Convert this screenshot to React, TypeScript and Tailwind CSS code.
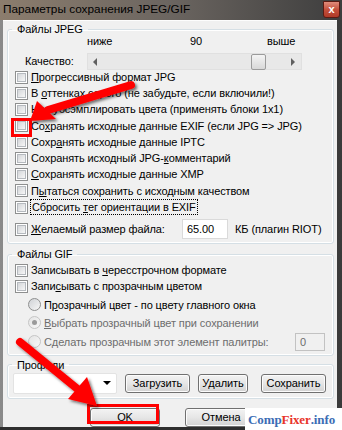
import React, { FC, ReactNode } from "react";

const Box: FC = () => (
	<span className="w-[13px] h-[13px] shrink-0 border border-[#8e8f8f] bg-white p-[1px]">
		<span className="block w-full h-full border border-[#b5b9be] bg-gradient-to-br from-[#d4d6d9] to-[#f7f7f7]" />
	</span>
);

const Radio: FC<{ checked?: boolean; disabled?: boolean }> = ({ checked, disabled }) => (
	<span
		className={
			"w-[13px] h-[13px] shrink-0 rounded-full border flex items-center justify-center " +
			(disabled
				? "border-[#c5c5c5] bg-gradient-to-br from-[#e4e4e4] to-[#f8f8f8]"
				: "border-[#8e8f8f] bg-gradient-to-br from-[#cfd2d6] to-[#f7f7f7]")
		}
	>
		{checked && <span className="w-[5px] h-[5px] rounded-full bg-[#9a9a9a]" />}
	</span>
);

const Check: FC<{ children: ReactNode }> = ({ children }) => (
	<div className="flex items-center h-[16.25px] pl-[7px] gap-[3px] whitespace-nowrap">
		<Box />
		<span>{children}</span>
	</div>
);

const Btn: FC<{ w: string; children: ReactNode }> = ({ w, children }) => (
	<div
		className={
			w +
			" h-[19px] flex items-center justify-center rounded-[3px] border border-[#707070] bg-gradient-to-b from-[#f3f3f3] via-[#e6e6e6] to-[#d2d2d2] shadow-[inset_0_0_0_1px_#fcfcfc]"
		}
	>
		{children}
	</div>
);

const Legend: FC<{ children: ReactNode }> = ({ children }) => (
	<legend className="ml-[4px] px-[5px] leading-[14px]">{children}</legend>
);

const App: FC = () => {
	return (
		<div className="relative w-[342px] h-[430px] overflow-hidden bg-gradient-to-r from-[#8a8a8a] to-[#3a3a3a] font-['Liberation_Sans',Arial,sans-serif] text-[11px] tracking-[-0.1px] text-black">
			{/* title bar */}
			<div className="h-[20px] flex items-center bg-gradient-to-r from-[#8c7d6d] via-[#6b6560] to-[#3e3e3e]">
				<span className="pl-[3px] text-[11.8px] tracking-normal text-black leading-none">Параметры сохранения JPEG/GIF</span>
				<div className="ml-auto mr-[2px] mb-[2px] w-[17px] h-[17px] rounded-b-[3px] border border-[#5a1a12] bg-gradient-to-b from-[#e08c7c] via-[#c4503c] to-[#b03a28] flex items-center justify-center text-white font-bold text-[11px] leading-none">
					x
				</div>
			</div>

			{/* window body */}
			<div className="ml-[3px] mr-[5px] h-[407px] bg-[#f0f0f0] border-t border-[#fdfdfd] pl-[4px] pr-[3px] pt-[1px] flex flex-col">
				{/* JPEG */}
				<fieldset className="border border-[#d5dfe5] rounded-[3px] pb-0 shadow-[inset_0_0_0_1px_#ffffff]">
					<Legend>Файлы JPEG</Legend>
					<div className="flex h-[14px] mt-[-2px] items-center">
						<span className="ml-[79px] w-[60px]">ниже</span>
						<span className="w-[42px] text-center ml-[28px]">90</span>
						<span className="ml-[50px]">выше</span>
					</div>
					<div className="flex items-center h-[17px] mt-[5px]">
						<span className="pl-[17px] w-[79px]">Качество:</span>
						<div className="w-[215px] h-[17px] bg-[#e8e8e8] border border-[#e0e0e0] flex items-center">
							<span className="w-0 h-0 ml-[5px] border-y-[4px] border-y-transparent border-r-[4px] border-r-[#606060]" />
							<div className="ml-auto w-[15px] h-[16px] rounded-[2px] border border-[#9b9b9b] bg-gradient-to-b from-[#f4f4f4] to-[#d8d8d8]" />
							<span className="ml-[25px] mr-[6px] w-0 h-0 border-y-[4px] border-y-transparent border-l-[4px] border-l-[#606060]" />
						</div>
					</div>
					<div className="mt-[-1px]">
						<Check>
							<u>П</u>рогрессивный формат JPG
						</Check>
						<Check>
							В <u>о</u>ттенках серого (не забудьте, если включили!)
						</Check>
						<Check>Не субсэмплировать цвета (применять блоки 1x1)</Check>
						<Check>
							Со<u>х</u>ранять исходные данные EXIF (если JPG =&gt; JPG)
						</Check>
						<Check>
							Сохр<u>а</u>нять исходные данные IPTC
						</Check>
						<Check>
							Сохранять исходный JPG-<u>к</u>омментарий
						</Check>
						<Check>
							<u>С</u>охранять исходные данные XMP
						</Check>
						<Check>
							П<u>ы</u>таться сохранить с исходным качеством
						</Check>
						<div className="flex items-center h-[16.25px] pl-[7px] gap-[2px] whitespace-nowrap">
							<Box />
							<span className="border border-dotted border-black px-[1px] leading-[14px]">
								Сбросить <u>т</u>ег ориентации в EXIF
							</span>
						</div>
						<div className="flex items-center h-[20px] mt-[4px] mb-[4px] pl-[7px] gap-[3px] whitespace-nowrap">
							<Box />
							<span className="w-[148px]">
								<u>Ж</u>елаемый размер файла:
							</span>
							<div className="w-[46px] h-[20px] bg-white border border-[#dadada] flex items-center pl-[4px]">
								65.00
							</div>
							<span className="ml-[4px]">КБ (плагин RIOT)</span>
						</div>
					</div>
				</fieldset>

				{/* GIF */}
				<fieldset className="mt-[3px] border border-[#d5dfe5] rounded-[3px] pb-[3px] shadow-[inset_0_0_0_1px_#ffffff]">
					<Legend>Файлы GIF</Legend>
					<div className="mt-[1px]">
						<Check>
							Записывать в <u>ч</u>ересстрочном формате
						</Check>
						<Check>
							Запи<u>с</u>ывать с прозрачным цветом
						</Check>
					</div>
					<div className="flex items-center h-[18px] pl-[20px] gap-[3px] whitespace-nowrap mt-[1px]">
						<Radio />
						<span>
							П<u>р</u>озрачный цвет - по цвету главного окна
						</span>
					</div>
					<div className="flex items-center h-[18px] pl-[20px] gap-[3px] whitespace-nowrap text-[#6d6d6d]">
						<Radio checked disabled />
						<span>
							<u>В</u>ыбрать прозрачный цвет при сохранении
						</span>
					</div>
					<div className="flex items-center h-[20px] pl-[20px] gap-[3px] whitespace-nowrap text-[#6d6d6d]">
						<Radio disabled />
						<span className="w-[248px]">
							С<u>д</u>елать прозрачным этот элемент палитры:
						</span>
						<div className="w-[30px] h-[18px] bg-[#f0f0f0] border border-[#c2c2c2] pl-[4px] flex items-center">0</div>
					</div>
				</fieldset>

				{/* Profiles */}
				<fieldset className="mt-[2px] border border-[#d5dfe5] rounded-[3px] pb-[4px] shadow-[inset_0_0_0_1px_#ffffff]">
					<Legend>Профили</Legend>
					<div className="flex items-center pl-[5px] mt-[1px]">
						<div className="w-[104px] h-[21px] bg-white border border-[#e3e3e3] rounded-[2px] flex items-center justify-end pr-[5px]">
							<span className="w-0 h-0 border-x-[4px] border-x-transparent border-t-[4px] border-t-black" />
						</div>
						<div className="ml-[8px]">
							<Btn w="w-[65px]">Загрузить</Btn>
						</div>
						<div className="ml-[8px]">
							<Btn w="w-[50px]">Удалить</Btn>
						</div>
						<div className="ml-[13px]">
							<Btn w="w-[65px]">Сохранить</Btn>
						</div>
					</div>
				</fieldset>

				<div className="flex mt-[9px]">
					<div className="ml-[83px]">
						<Btn w="w-[70px]">OK</Btn>
					</div>
					<div className="ml-[25px]">
						<Btn w="w-[72px]">Отмена</Btn>
					</div>
				</div>
			</div>
			<div className="h-[3px] bg-[#2e2e2e]" />

			{/* annotations */}
			<svg className="absolute left-0 top-0 pointer-events-none" width="342" height="430" viewBox="0 0 342 430">
				<defs>
					<filter id="sh" x="-20%" y="-20%" width="140%" height="140%">
						<feDropShadow dx="2" dy="2" stdDeviation="1.8" floodColor="#000" floodOpacity="0.55" />
					</filter>
				</defs>
				<rect x="12.5" y="119.5" width="18" height="16" fill="none" stroke="#ff0000" strokeWidth="3" />
				<rect x="88.5" y="405.5" width="69" height="17" fill="none" stroke="#ff0000" strokeWidth="3" />
				<g filter="url(#sh)" fill="#ff0000">
					<line x1="131" y1="85" x2="48" y2="110" stroke="#ff0000" strokeWidth="8" strokeLinecap="round" />
					<polygon points="30,121 37,101 56,119" />
					<line x1="20" y1="342" x2="80" y2="391" stroke="#ff0000" strokeWidth="8" strokeLinecap="round" />
					<polygon points="97,406 68,399 87,377" />
				</g>
			</svg>

			<div className="absolute left-[245px] top-[408px] w-[97px] h-[22px] bg-white flex items-center pl-[3px] font-['Liberation_Serif',serif] font-bold text-[13px] leading-none tracking-[-0.1px]">
				<span className="text-[#3b6db5]">Comp</span>
				<span className="text-[#e8342a]">Fixer</span>
				<span className="text-[#3b6db5]">.info</span>
			</div>
		</div>
	);
};

export default App;
